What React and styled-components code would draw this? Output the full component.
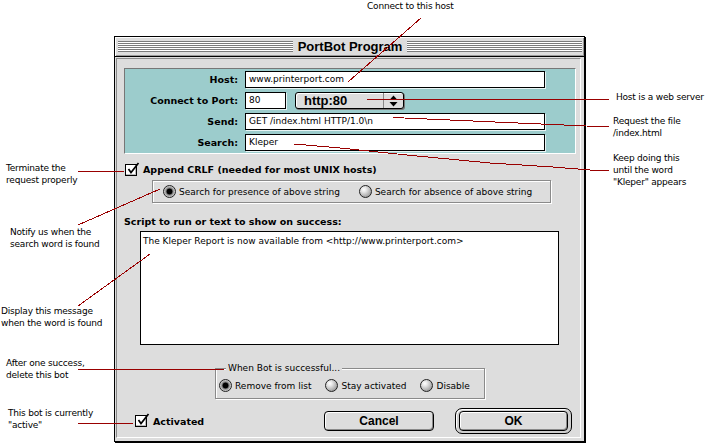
import React from "react";
import styled, { createGlobalStyle } from "styled-components";

const GlobalStyle = createGlobalStyle`
  html, body {
    margin: 0;
    padding: 0;
    background: #fff;
  }
  body {
    font-family: "DejaVu Sans", Verdana, sans-serif;
    color: #000;
  }
`;

const Canvas = styled.div`
  position: relative;
  width: 706px;
  height: 444px;
  box-sizing: border-box;
  padding: 36px 0 0 114px;
  overflow: hidden;
  background: #fff;
`;

const Window = styled.div`
  width: 471px;
  height: 406px;
  box-sizing: border-box;
  border: 1px solid #000;
  box-shadow: 1px 1px 0 #000;
  background: #dddddd;
  display: flex;
  flex-direction: column;
`;

const TitleBar = styled.div`
  height: 19px;
  border-bottom: 1px solid #000;
  display: flex;
  align-items: center;
  padding: 0 2px 0 3px;
  background: #dddddd;
  box-shadow: inset 1px 1px 0 #fff, inset -1px -1px 0 #999;
`;

const Stripes = styled.div`
  flex: 1;
  height: 11px;
  background: repeating-linear-gradient(
    to bottom,
    #7a7a7a 0 1px,
    #ffffff 1px 2px
  );
`;

const Title = styled.div`
  padding: 0 5px;
  font-family: "Liberation Sans", Arial, sans-serif;
  font-weight: bold;
  font-size: 13px;
  line-height: 19px;
  white-space: nowrap;
`;

const Body = styled.div`
  flex: 1;
  margin: 1px 3px 3px 1px;
  border-style: solid;
  border-width: 1px;
  border-color: #8a8a8a #fff #fff #8a8a8a;
  display: flex;
  flex-direction: column;
  align-items: flex-start;
  padding: 9px 8px 0 7px;
`;

const HostPanel = styled.div`
  width: 452px;
  box-sizing: border-box;
  background: #9ccccc;
  border-style: solid;
  border-width: 1px;
  border-color: #777 #fff #fff #777;
  display: grid;
  grid-template-columns: 113px max-content;
  column-gap: 7px;
  row-gap: 4px;
  padding: 2px 0;
`;

const FieldLabel = styled.div`
  text-align: right;
  font-weight: bold;
  font-size: 9.5px;
  line-height: 17px;
  white-space: nowrap;
`;

const Field = styled.div`
  width: ${(p) => p.$w}px;
  height: 17px;
  box-sizing: border-box;
  border: 1px solid #000;
  background: #fff;
  box-shadow: 1px 1px 0 #e8f4f4;
  padding-left: 3px;
  font-size: 9px;
  line-height: 15px;
  white-space: nowrap;
  overflow: hidden;
`;

const PortRow = styled.div`
  display: flex;
  align-items: center;
  gap: 9px;
`;

const Popup = styled.div`
  width: 109px;
  height: 17px;
  box-sizing: border-box;
  border: 1px solid #000;
  border-radius: 3px;
  background: #dddddd;
  box-shadow: inset 1px 1px 0 #fff, 1px 1px 0 #777;
  display: flex;
`;

const PopupText = styled.div`
  flex: 1;
  padding-left: 8px;
  font-family: "Liberation Sans", Arial, sans-serif;
  font-weight: bold;
  font-size: 13px;
  line-height: 15px;
`;

const PopupArrows = styled.div`
  width: 19px;
  border-left: 1px solid #888;
  display: flex;
  align-items: center;
  justify-content: center;
`;

const CheckRow = styled.div`
  display: flex;
  align-items: center;
  gap: 6px;
  height: 13px;
  margin: ${(p) => p.$top || 0}px 0 0 ${(p) => p.$left || 0}px;
`;

const CheckBox = styled.span`
  position: relative;
  width: 12px;
  height: 12px;
  box-sizing: border-box;
  border: 1px solid #000;
  background: #fff;
  box-shadow: inset -1px -1px 0 #bbb;

  svg {
    position: absolute;
    left: 0;
    top: -3px;
    overflow: visible;
  }
`;

const BoldText = styled.span`
  font-weight: bold;
  font-size: 9.5px;
  white-space: nowrap;
`;

const SearchGroup = styled.div`
  width: 399px;
  height: 23px;
  box-sizing: border-box;
  margin: 4px 0 0 28px;
  border: 1px solid #8a8a8a;
  box-shadow: 1px 1px 0 #fff, inset 1px 1px 0 #fff;
  display: flex;
  align-items: center;
  gap: 19px;
  padding-left: 10px;
`;

const RadioOption = styled.div`
  display: flex;
  align-items: center;
  gap: 3px;
  font-size: 9px;
  white-space: nowrap;
`;

const Radio = styled.span`
  width: 13px;
  height: 13px;
  box-sizing: border-box;
  border-radius: 50%;
  border: 1px solid #222;
  background: ${(p) =>
    p.$on
      ? "radial-gradient(circle at 50% 50%, #000 0 2.6px, #666 3.2px, #9a9a9a 4px, #d0d0d0 5.5px)"
      : "radial-gradient(circle at 35% 32%, #fff 0, #e6e6e6 25%, #a8a8a8 70%, #777 100%)"};
`;

const SectionLabel = styled.div`
  margin-top: 13px;
  font-weight: bold;
  font-size: 9.5px;
  line-height: 12px;
  white-space: nowrap;
`;

const TextArea = styled.div`
  width: 419px;
  height: 114px;
  box-sizing: border-box;
  margin: 3px 0 0 16px;
  border: 1px solid #000;
  background: #fff;
  padding: 3px 2px;
  font-size: 9px;
  line-height: 12px;
  white-space: nowrap;
`;

const BotGroup = styled.div`
  position: relative;
  width: 270px;
  height: 31px;
  box-sizing: border-box;
  margin: 23px 0 0 91px;
  border: 1px solid #8a8a8a;
  box-shadow: 1px 1px 0 #fff, inset 1px 1px 0 #fff;
  display: flex;
  align-items: center;
  gap: 14px;
  padding: 4px 0 0 3px;
`;

const Legend = styled.span`
  position: absolute;
  left: 10px;
  top: -7px;
  padding: 0 2px;
  background: #dddddd;
  font-size: 9px;
  line-height: 12px;
  white-space: nowrap;
`;

const ButtonRow = styled.div`
  align-self: stretch;
  height: 26px;
  margin-top: 9px;
  display: flex;
  align-items: center;
  padding-left: 11px;
`;

const PushButton = styled.div`
  width: ${(p) => (p.$w ? `${p.$w}px` : "100%")};
  height: 20px;
  box-sizing: border-box;
  border: 1px solid #000;
  border-radius: 4px;
  background: #dddddd;
  box-shadow: inset 1px 1px 0 #fff, inset -1px -1px 0 #8a8a8a;
  display: flex;
  align-items: center;
  justify-content: center;
  font-family: "Liberation Sans", Arial, sans-serif;
  font-weight: bold;
  font-size: 12px;
`;

const CancelSlot = styled.div`
  margin-left: auto;
`;

const DefaultRing = styled.div`
  width: 117px;
  height: 26px;
  box-sizing: border-box;
  margin-left: 21px;
  border: 1px solid #000;
  border-radius: 7px;
  padding: 2px 3px;
  background: #cfcfcf;
  box-shadow: inset 1px 1px 0 #fff;
`;

const Note = styled.div`
  position: absolute;
  left: ${(p) => p.$x}px;
  top: ${(p) => p.$y}px;
  font-size: 9px;
  line-height: 12px;
  letter-spacing: -0.2px;
  white-space: pre;
`;

const Leaders = styled.svg`
  position: absolute;
  left: 0;
  top: 0;
  pointer-events: none;
`;

const notes = [
  { x: 367, y: 0, text: "Connect to this host" },
  { x: 616, y: 91, text: "Host is a web server" },
  { x: 613, y: 115, text: "Request the file\n/index.html" },
  { x: 613, y: 152, text: 'Keep doing this\nuntil the word\n"Kleper" appears' },
  { x: 6, y: 162, text: "Terminate the\nrequest properly" },
  { x: 10, y: 226, text: "Notify us when the\nsearch word is found" },
  { x: 1, y: 305, text: "Display this message\nwhen the word is found" },
  { x: 6, y: 357, text: "After one success,\ndelete this bot" },
  { x: 8, y: 407, text: 'This bot is currently\n"active"' },
];

const leaders = [
  "348,82 421,18",
  "367,99.5 609,99.5",
  "393,117.5 609,127",
  "294,144 340,148 407,155 490,163 553,167 590,170 609,170",
  "78,171.5 124,171.5",
  "78,225 160,189",
  "78,306 150,254",
  "78,369.5 224,369.5",
  "78,423.5 133,423.5",
];

function Check() {
  return (
    <svg width="14" height="14" viewBox="0 0 14 14">
      <polyline
        points="2.5,7 5,10.5 12.5,1"
        fill="none"
        stroke="#000"
        strokeWidth="1.7"
      />
    </svg>
  );
}

function Arrows() {
  return (
    <svg width="9" height="12" viewBox="0 0 9 12">
      <polygon points="4.5,0.5 8.5,5 0.5,5" fill="#000" />
      <polygon points="0.5,7 8.5,7 4.5,11.5" fill="#000" />
    </svg>
  );
}

export default function App() {
  return (
    <Canvas>
      <GlobalStyle />
      <Window>
        <TitleBar>
          <Stripes />
          <Title>PortBot Program</Title>
          <Stripes />
        </TitleBar>
        <Body>
          <HostPanel>
            <FieldLabel>Host:</FieldLabel>
            <Field $w={300}>www.printerport.com</Field>
            <FieldLabel>Connect to Port:</FieldLabel>
            <PortRow>
              <Field $w={41}>80</Field>
              <Popup>
                <PopupText>http:80</PopupText>
                <PopupArrows>
                  <Arrows />
                </PopupArrows>
              </Popup>
            </PortRow>
            <FieldLabel>Send:</FieldLabel>
            <Field $w={300}>GET /index.html HTTP/1.0\n</Field>
            <FieldLabel>Search:</FieldLabel>
            <Field $w={300}>Kleper</Field>
          </HostPanel>

          <CheckRow $top={9} $left={1}>
            <CheckBox>
              <Check />
            </CheckBox>
            <BoldText>Append CRLF (needed for most UNIX hosts)</BoldText>
          </CheckRow>

          <SearchGroup>
            <RadioOption>
              <Radio $on />
              Search for presence of above string
            </RadioOption>
            <RadioOption>
              <Radio />
              Search for absence of above string
            </RadioOption>
          </SearchGroup>

          <SectionLabel>Script to run or text to show on success:</SectionLabel>
          <TextArea>
            The Kleper Report is now available from &lt;http://www.printerport.com&gt;
          </TextArea>

          <BotGroup>
            <Legend>When Bot is successful...</Legend>
            <RadioOption>
              <Radio $on />
              Remove from list
            </RadioOption>
            <RadioOption>
              <Radio />
              Stay activated
            </RadioOption>
            <RadioOption>
              <Radio />
              Disable
            </RadioOption>
          </BotGroup>

          <ButtonRow>
            <CheckRow>
              <CheckBox>
                <Check />
              </CheckBox>
              <BoldText>Activated</BoldText>
            </CheckRow>
            <CancelSlot>
              <PushButton $w={110}>Cancel</PushButton>
            </CancelSlot>
            <DefaultRing>
              <PushButton>OK</PushButton>
            </DefaultRing>
          </ButtonRow>
        </Body>
      </Window>

      {notes.map((n) => (
        <Note key={n.text} $x={n.x} $y={n.y}>
          {n.text}
        </Note>
      ))}

      <Leaders width="706" height="444" viewBox="0 0 706 444">
        {leaders.map((pts) => (
          <polyline
            key={pts}
            points={pts}
            fill="none"
            stroke="#990000"
            strokeWidth="1"
            shapeRendering="crispEdges"
          />
        ))}
      </Leaders>
    </Canvas>
  );
}
